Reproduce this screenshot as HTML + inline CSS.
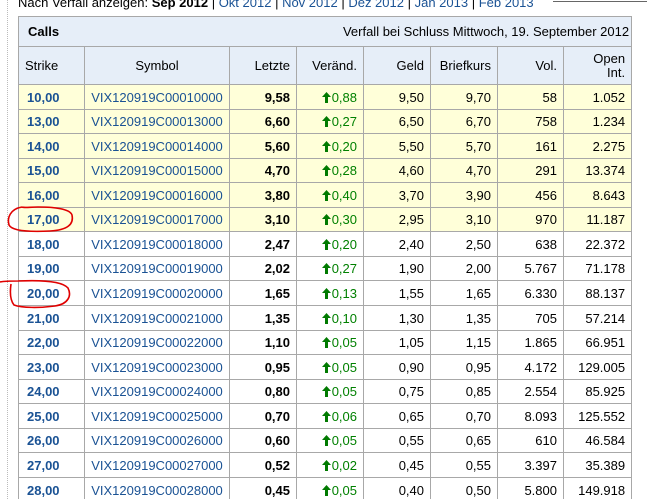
<!DOCTYPE html>
<html><head><meta charset="utf-8"><style>
html,body{margin:0;padding:0;background:#fff;width:647px;height:499px;overflow:hidden;position:relative;font-family:"Liberation Sans",Arial,sans-serif;font-size:13px}
.top{position:absolute;left:18px;top:-5px;white-space:nowrap;font-size:13px;color:#000}
.top a{color:#1a5294;text-decoration:none}
.dl{position:absolute;left:7px;top:0;height:499px;border-left:1px dotted #bbb}
table{position:absolute;left:18px;top:16px;border-collapse:collapse;table-layout:fixed;width:613px}
td{border:1px solid #a8a8a8;padding:0 6px;white-space:nowrap;overflow:hidden;text-align:right}
.h td{background:#e6eef8;color:#000}
.cap td{height:29px;text-align:right;padding-right:2px}
.cap td b{float:left;padding-left:3px}
.hd td{height:37px;text-align:right;line-height:14px}
.hd td.c{text-align:center}
td.s{font-weight:bold;color:#1a5294;text-align:left;padding-left:8px}
td.y{color:#1a5294;text-align:center}
td.l{font-weight:bold;color:#000}
td.v{color:#008000}
td.v svg{vertical-align:-1px;margin-right:1px}
tr.ye td{background:#ffffd9}
</style></head><body>
<div class="dl"></div>
<div class="top">Nach Verfall anzeigen: <b>Sep 2012</b> | <a>Okt 2012</a> | <a>Nov 2012</a> | <a>Dez 2012</a> | <a>Jan 2013</a> | <a>Feb 2013</a></div>
<div style="position:absolute;left:553px;top:1px;width:94px;border-top:1px solid #666"></div>
<svg width="0" height="0" style="position:absolute"><defs><symbol id="a" viewBox="0 0 9 11"><path d="M4.5 0 L9 5 L6 5 L6 11 L3 11 L3 5 L0 5 Z" fill="#007a00"/></symbol></defs></svg>
<table>
<colgroup><col style="width:66px"><col style="width:145px"><col style="width:67px"><col style="width:67px"><col style="width:67px"><col style="width:67px"><col style="width:66px"><col style="width:68px"></colgroup>
<tr class="h cap"><td colspan="8"><b>Calls</b>Verfall bei Schluss Mittwoch, 19. September 2012</td></tr>
<tr class="h hd"><td class="c" style="text-align:left">Strike</td><td class="c">Symbol</td><td>Letzte</td><td>Veränd.</td><td>Geld</td><td>Briefkurs</td><td>Vol.</td><td>Open<br>Int.</td></tr>
<tr class="ye" style="height:25px"><td class="s">10,00</td><td class="y">VIX120919C00010000</td><td class="l">9,58</td><td class="v"><svg width="9" height="11"><use href="#a"/></svg>0,88</td><td>9,50</td><td>9,70</td><td>58</td><td>1.052</td></tr>
<tr class="ye" style="height:24px"><td class="s">13,00</td><td class="y">VIX120919C00013000</td><td class="l">6,60</td><td class="v"><svg width="9" height="11"><use href="#a"/></svg>0,27</td><td>6,50</td><td>6,70</td><td>758</td><td>1.234</td></tr>
<tr class="ye" style="height:25px"><td class="s">14,00</td><td class="y">VIX120919C00014000</td><td class="l">5,60</td><td class="v"><svg width="9" height="11"><use href="#a"/></svg>0,20</td><td>5,50</td><td>5,70</td><td>161</td><td>2.275</td></tr>
<tr class="ye" style="height:24px"><td class="s">15,00</td><td class="y">VIX120919C00015000</td><td class="l">4,70</td><td class="v"><svg width="9" height="11"><use href="#a"/></svg>0,28</td><td>4,60</td><td>4,70</td><td>291</td><td>13.374</td></tr>
<tr class="ye" style="height:25px"><td class="s">16,00</td><td class="y">VIX120919C00016000</td><td class="l">3,80</td><td class="v"><svg width="9" height="11"><use href="#a"/></svg>0,40</td><td>3,70</td><td>3,90</td><td>456</td><td>8.643</td></tr>
<tr class="ye" style="height:24px"><td class="s">17,00</td><td class="y">VIX120919C00017000</td><td class="l">3,10</td><td class="v"><svg width="9" height="11"><use href="#a"/></svg>0,30</td><td>2,95</td><td>3,10</td><td>970</td><td>11.187</td></tr>
<tr style="height:25px"><td class="s">18,00</td><td class="y">VIX120919C00018000</td><td class="l">2,47</td><td class="v"><svg width="9" height="11"><use href="#a"/></svg>0,20</td><td>2,40</td><td>2,50</td><td>638</td><td>22.372</td></tr>
<tr style="height:24px"><td class="s">19,00</td><td class="y">VIX120919C00019000</td><td class="l">2,02</td><td class="v"><svg width="9" height="11"><use href="#a"/></svg>0,27</td><td>1,90</td><td>2,00</td><td>5.767</td><td>71.178</td></tr>
<tr style="height:25px"><td class="s">20,00</td><td class="y">VIX120919C00020000</td><td class="l">1,65</td><td class="v"><svg width="9" height="11"><use href="#a"/></svg>0,13</td><td>1,55</td><td>1,65</td><td>6.330</td><td>88.137</td></tr>
<tr style="height:25px"><td class="s">21,00</td><td class="y">VIX120919C00021000</td><td class="l">1,35</td><td class="v"><svg width="9" height="11"><use href="#a"/></svg>0,10</td><td>1,30</td><td>1,35</td><td>705</td><td>57.214</td></tr>
<tr style="height:24px"><td class="s">22,00</td><td class="y">VIX120919C00022000</td><td class="l">1,10</td><td class="v"><svg width="9" height="11"><use href="#a"/></svg>0,05</td><td>1,05</td><td>1,15</td><td>1.865</td><td>66.951</td></tr>
<tr style="height:25px"><td class="s">23,00</td><td class="y">VIX120919C00023000</td><td class="l">0,95</td><td class="v"><svg width="9" height="11"><use href="#a"/></svg>0,05</td><td>0,90</td><td>0,95</td><td>4.172</td><td>129.005</td></tr>
<tr style="height:24px"><td class="s">24,00</td><td class="y">VIX120919C00024000</td><td class="l">0,80</td><td class="v"><svg width="9" height="11"><use href="#a"/></svg>0,05</td><td>0,75</td><td>0,85</td><td>2.554</td><td>85.925</td></tr>
<tr style="height:25px"><td class="s">25,00</td><td class="y">VIX120919C00025000</td><td class="l">0,70</td><td class="v"><svg width="9" height="11"><use href="#a"/></svg>0,06</td><td>0,65</td><td>0,70</td><td>8.093</td><td>125.552</td></tr>
<tr style="height:24px"><td class="s">26,00</td><td class="y">VIX120919C00026000</td><td class="l">0,60</td><td class="v"><svg width="9" height="11"><use href="#a"/></svg>0,05</td><td>0,55</td><td>0,65</td><td>610</td><td>46.584</td></tr>
<tr style="height:25px"><td class="s">27,00</td><td class="y">VIX120919C00027000</td><td class="l">0,52</td><td class="v"><svg width="9" height="11"><use href="#a"/></svg>0,02</td><td>0,45</td><td>0,55</td><td>3.397</td><td>35.389</td></tr>
<tr style="height:25px"><td class="s">28,00</td><td class="y">VIX120919C00028000</td><td class="l">0,45</td><td class="v"><svg width="9" height="11"><use href="#a"/></svg>0,05</td><td>0,40</td><td>0,50</td><td>5.800</td><td>149.918</td></tr>
</table>
<svg width="647" height="499" style="position:absolute;left:0;top:0" fill="none" stroke="#e00000" stroke-width="1.6">
<path d="M22 207 C10 209 7 218 9 225 C12 231 30 232 50 231 C68 230 74 224 72 215 C70 209 55 207 38 207 C30 207 24 208 22 207"/>
<path d="M0 282 C5 281 12 281 18 281 C40 280 62 281 68 288 C72 296 68 304 55 306 C40 308 22 308 14 305 C10 300 10 291 11 284"/>
</svg>
</body></html>
